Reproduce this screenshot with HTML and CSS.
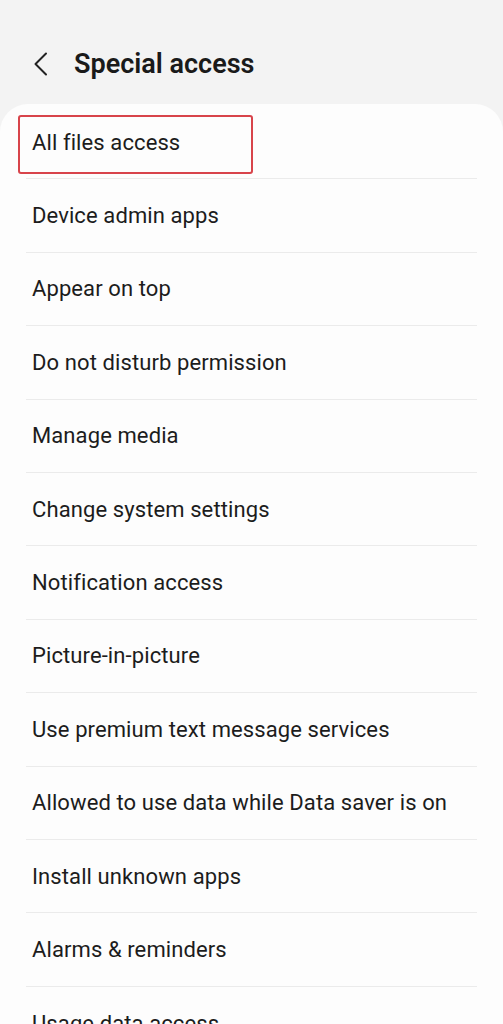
FILE: index.html
```html
<!DOCTYPE html>
<html lang="en">
<head>
<meta charset="utf-8">
<title>Special access</title>
<link rel="stylesheet" href="styles.css">
</head>
<body>
<header class="header">
  <svg class="back" width="16" height="24" viewBox="0 0 16 24" aria-hidden="true">
    <path d="M13 1.5 L2.5 12 L13 22.5" fill="none" stroke="#222" stroke-width="2" stroke-linecap="round" stroke-linejoin="round"/>
  </svg>
  <h1 class="title">Special access</h1>
</header>
<main class="card">
  <div class="highlight"></div>
  <div class="row">All files access</div>
  <div class="row">Device admin apps</div>
  <div class="row">Appear on top</div>
  <div class="row">Do not disturb permission</div>
  <div class="row">Manage media</div>
  <div class="row">Change system settings</div>
  <div class="row">Notification access</div>
  <div class="row">Picture-in-picture</div>
  <div class="row">Use premium text message services</div>
  <div class="row">Allowed to use data while Data saver is on</div>
  <div class="row">Install unknown apps</div>
  <div class="row">Alarms &amp; reminders</div>
  <div class="row">Usage data access</div>
</main>
</body>
</html>
```
FILE: styles.css
```css
html, body {
  margin: 0;
  padding: 0;
}
body {
  background: #f3f3f3;
  font-family: Roboto, "Liberation Sans", sans-serif;
  color: #1c1c1c;
  overflow: hidden;
}
.header {
  display: flex;
  align-items: center;
  padding: 32px 0 8px 33px;
  box-sizing: border-box;
  height: 104px;
}
.back {
  display: block;
  flex: none;
}
.title {
  margin: 0 0 0 25px;
  font-size: 27px;
  font-weight: 600;
  color: #1a1a1a;
}
.card {
  position: relative;
  background: #fdfdfd;
  border-radius: 28px;
  padding-top: 2px;
  padding-bottom: 40px;
}
.row {
  height: 73.4px;
  box-sizing: border-box;
  display: flex;
  align-items: center;
  margin: 0 26px;
  padding-left: 6px;
  font-size: 22px;
  letter-spacing: 0.1px;
  border-bottom: 1px solid #ebebeb;
}
.row:first-of-type {
  height: 74px;
}
.row:last-child {
  border-bottom: none;
}
.highlight {
  position: absolute;
  left: 18px;
  top: 11px;
  width: 235px;
  height: 59px;
  box-sizing: border-box;
  border: 2.5px solid #d8444b;
  border-radius: 3px;
}
```
